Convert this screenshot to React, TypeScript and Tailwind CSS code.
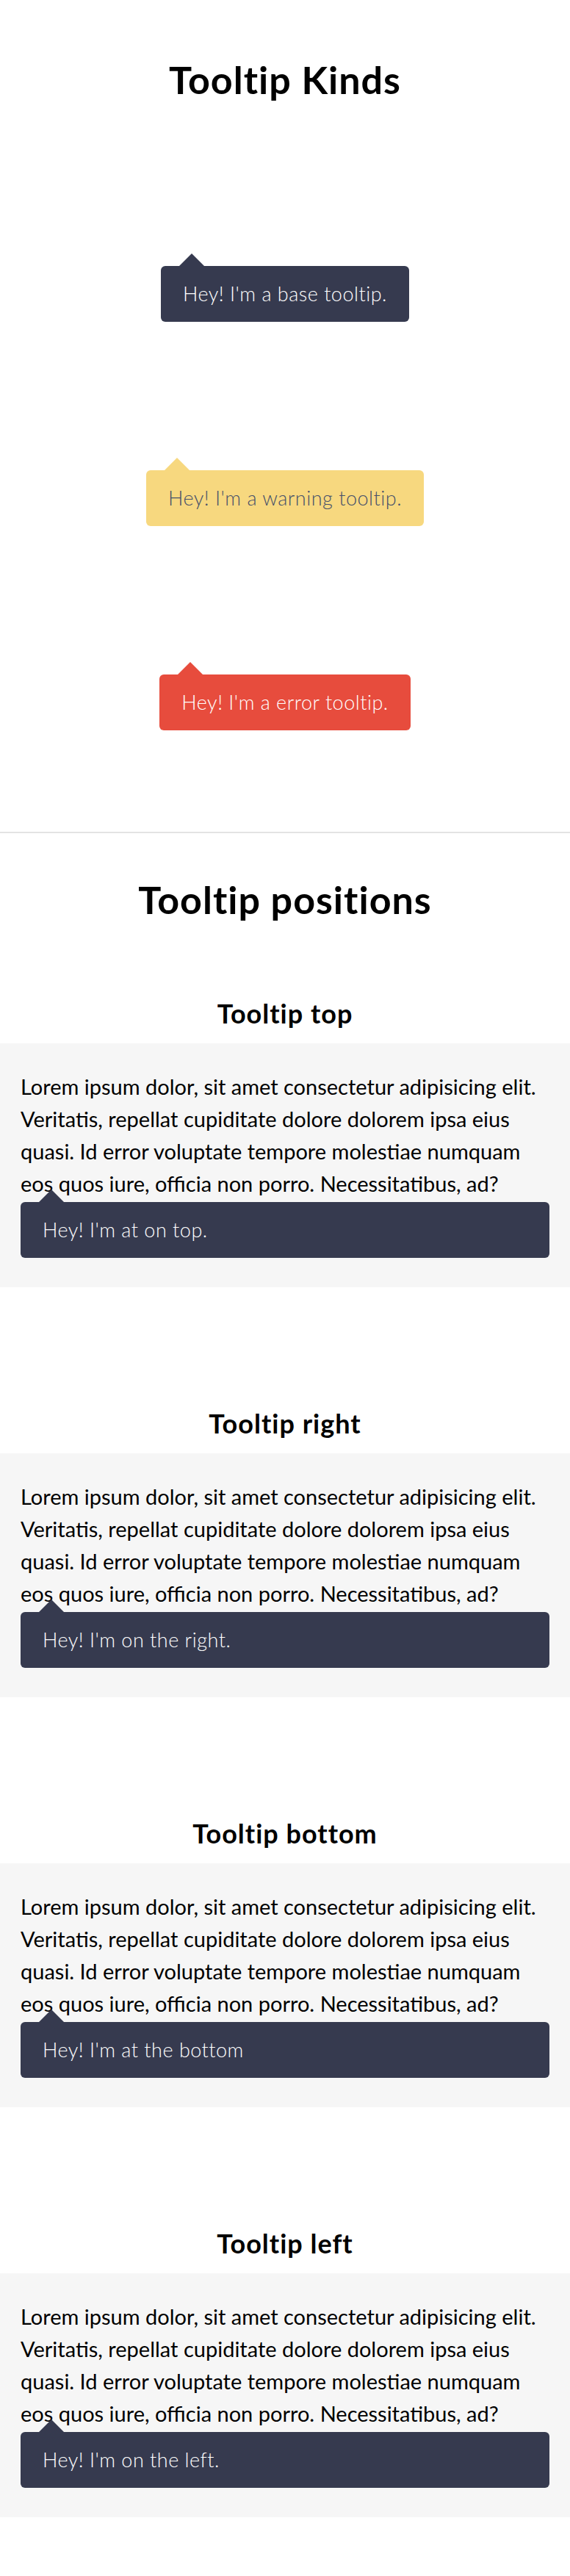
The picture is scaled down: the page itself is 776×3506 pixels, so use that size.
import React from "react";

type Kind = "base" | "warning" | "error";

const boxStyles: Record<Kind, string> = {
    base: "bg-[#363a4f] text-white",
    warning: "bg-[#f7d87f] text-[#46506a]",
    error: "bg-[#e74c3d] text-white",
};

const arrowStyles: Record<Kind, string> = {
    base: "border-b-[#363a4f]",
    warning: "border-b-[#f7d87f]",
    error: "border-b-[#e74c3d]",
};

function Tooltip({ kind = "base", full = false, children }: { kind?: Kind; full?: boolean; children: React.ReactNode }) {
    return (
        <div
            className={`relative rounded-[6px] px-[30px] py-[20px] text-[27px] leading-[36px] tracking-[0.5px] font-light ${boxStyles[kind]} ${full ? "w-full" : "inline-block"}`}
        >
            {/* little arrow pointing up */}
            <span
                className={`absolute -top-[17px] left-[25px] w-0 h-0 border-x-[17px] border-x-transparent border-b-[17px] ${arrowStyles[kind]}`}
            />
            {children}
        </div>
    );
}

const lorem =
    "Lorem ipsum dolor, sit amet consectetur adipisicing elit. Veritatis, repellat cupiditate dolore dolorem ipsa eius quasi. Id error voluptate tempore molestiae numquam eos quos iure, officia non porro. Necessitatibus, ad?";

const positions = [
    { title: "Tooltip top", text: "Hey! I'm at on top." },
    { title: "Tooltip right", text: "Hey! I'm on the right." },
    { title: "Tooltip bottom", text: "Hey! I'm at the bottom" },
    { title: "Tooltip left", text: "Hey! I'm on the left." },
];

export default function App() {
    return (
        <div className="min-h-screen bg-white text-black font-['Lato','Liberation_Sans',sans-serif]">
            {/* Kinds */}
            <section className="pt-[79px] pb-[138px] flex flex-col items-center">
                <h1 className="text-[52px] leading-[58px] tracking-[1px] font-bold">Tooltip Kinds</h1>
                <div className="mt-[225px] flex flex-col items-center gap-[202px]">
                    <Tooltip kind="base">Hey! I'm a base tooltip.</Tooltip>
                    <Tooltip kind="warning">Hey! I'm a warning tooltip.</Tooltip>
                    <Tooltip kind="error">Hey! I'm a error tooltip.</Tooltip>
                </div>
            </section>

            <hr className="border-0 border-t-2 border-[#e3e3e3]" />

            {/* Positions */}
            <section className="pt-[61px] pb-[80px]">
                <h1 className="text-center text-[52px] leading-[58px] tracking-[1px] font-bold">Tooltip positions</h1>
                <div className="mt-[105px] flex flex-col gap-[164px]">
                    {positions.map((p) => (
                        <div key={p.title}>
                            <h2 className="text-center text-[36px] leading-[42px] tracking-[1px] font-bold mb-[20px]">{p.title}</h2>
                            <div className="bg-[#f6f6f6] px-[28px] pt-[37px] pb-[40px]">
                                <p className="text-[29px] leading-[44px] font-normal">{lorem}</p>
                                <div className="mt-[3px]">
                                    <Tooltip full>{p.text}</Tooltip>
                                </div>
                            </div>
                        </div>
                    ))}
                </div>
            </section>
        </div>
    );
}
